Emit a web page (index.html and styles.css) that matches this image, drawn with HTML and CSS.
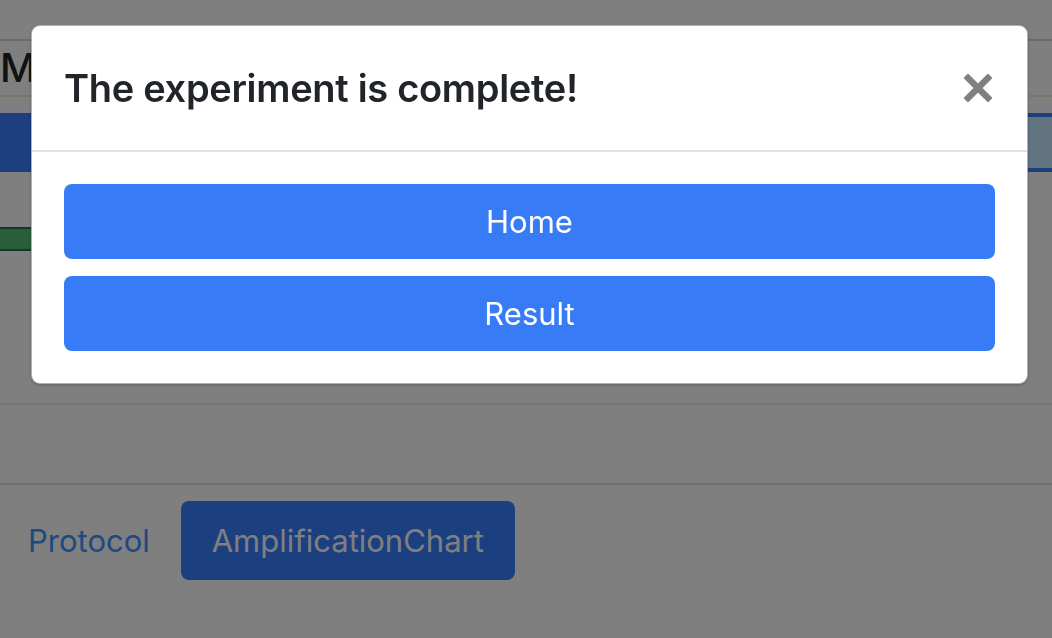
FILE: index.html
```html
<!DOCTYPE html>
<html lang="en">
<head>
<meta charset="utf-8">
<title>Experiment complete</title>
<link rel="stylesheet" href="styles.css">
</head>
<body>
<div class="page">
  <div class="topbar"></div>
  <div class="title-row"><h2 class="page-title">Mo</h2></div>
  <div class="tabs">
    <div class="tab tab-active"></div>
    <div class="tab tab-outline"></div>
  </div>
  <div class="progress"><div class="progress-fill"></div></div>
  <div class="panel"></div>
  <div class="section-gap"></div>
  <nav class="footer-nav">
    <a class="nav-link" href="#">Protocol</a>
    <a class="nav-btn" href="#">AmplificationChart</a>
  </nav>
</div>

<div class="backdrop"></div>

<div class="modal">
  <div class="modal-header">
    <h5 class="modal-title">The experiment is complete!</h5>
    <button class="close" type="button" aria-label="Close">
      <svg width="28" height="28" viewBox="0 0 28 28"><path d="M4 4 L24 24 M24 4 L4 24" stroke="currentColor" stroke-width="6.5" stroke-linecap="square" fill="none"/></svg>
    </button>
  </div>
  <div class="modal-body">
    <button class="btn-primary" type="button">Home</button>
    <button class="btn-primary" type="button">Result</button>
  </div>
</div>
</body>
</html>
```
FILE: styles.css
```css
* { box-sizing: border-box; }
html, body { margin: 0; padding: 0; }
body {
  font-family: Inter, "Noto Sans", "Liberation Sans", sans-serif;
  background: #ffffff;
  color: #212529;
  width: 1052px;
  height: 638px;
  overflow: hidden;
}

.page { width: 1052px; }
.topbar {
  height: 41px;
  border-bottom: 2px solid #d6d6d6;
}
.title-row {
  height: 56px;
  border-bottom: 2px solid #eeeed2;
  overflow: hidden;
}
.page-title {
  margin: 0;
  font-size: 40px;
  font-weight: 500;
  line-height: 54px;
  color: #212529;
}
.tabs {
  display: flex;
  margin-top: 16px;
  height: 59px;
}
.tab-active {
  flex: 0 0 900px;
  background: #3a7cff;
}
.tab-outline {
  flex: 1;
  background: #c4e8ff;
  border-top: 4px solid #3a7cff;
  border-bottom: 4px solid #3a7cff;
}
.progress {
  margin-top: 55px;
  height: 24px;
  width: 700px;
  background: #54bc74;
  border-top: 2px solid #2f6e42;
  border-bottom: 2px solid #2f6e42;
}
.panel {
  height: 154px;
  border-bottom: 2px solid #eeeed2;
}
.section-gap {
  height: 80px;
  border-bottom: 2px solid #dcdcdc;
}
.footer-nav {
  display: flex;
  align-items: center;
  gap: 31px;
  padding: 16px 0 0 28px;
}
.nav-link {
  font-size: 31px;
  color: #3d95ff;
  text-decoration: none;
}
.nav-btn {
  display: block;
  width: 334px;
  height: 79px;
  line-height: 79px;
  text-align: center;
  font-size: 31px;
  color: #ffffff;
  background: #367efe;
  border-radius: 8px;
  text-decoration: none;
}

.backdrop {
  position: fixed;
  inset: 0;
  background: rgba(0, 0, 0, 0.5);
}

.modal {
  position: fixed;
  top: 25px;
  left: 31px;
  width: 997px;
  background: #ffffff;
  border: 1px solid rgba(0, 0, 0, 0.3);
  border-radius: 9px;
  box-shadow: 0 1px 3px rgba(0, 0, 0, 0.25);
}
.modal-header {
  display: flex;
  align-items: center;
  justify-content: space-between;
  padding: 32px 32px 32px 32px;
  border-bottom: 2px solid #e2e2e2;
}
.modal-title {
  margin: 0;
  font-size: 38px;
  font-weight: 600;
  line-height: 60px;
  color: #212529;
  letter-spacing: -0.3px;
}
.close {
  border: 0;
  background: none;
  padding: 0;
  margin-right: 3px;
  color: #808080;
  display: flex;
  cursor: pointer;
}
.modal-body {
  display: flex;
  flex-direction: column;
  gap: 17px;
  padding: 32px;
}
.btn-primary {
  display: block;
  width: 100%;
  height: 75px;
  border: 0;
  border-radius: 8px;
  background: #377bf6;
  color: #ffffff;
  font-family: inherit;
  font-size: 31px;
  font-weight: 400;
}
```
